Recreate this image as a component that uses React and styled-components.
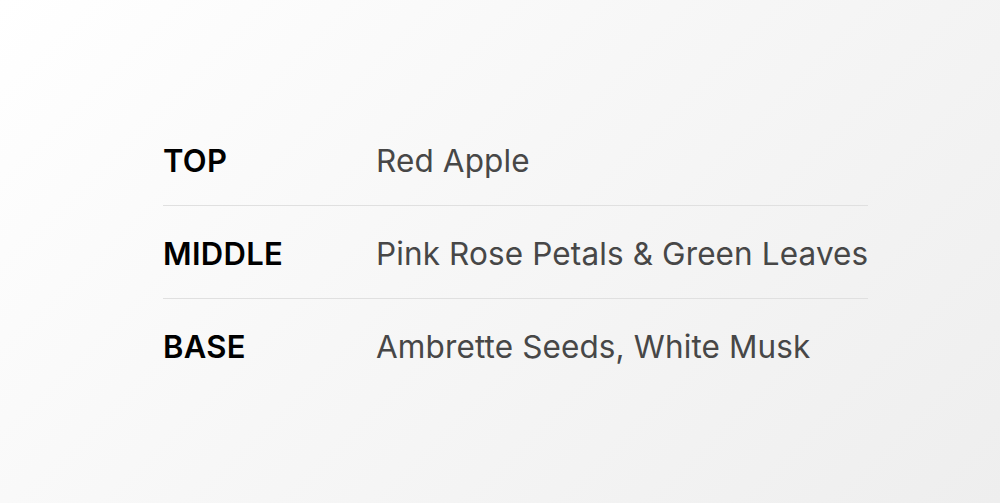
import styled, { createGlobalStyle } from "styled-components";

const GlobalStyle = createGlobalStyle`
  html, body {
    margin: 0;
    padding: 0;
  }

  body {
    font-family: Inter, "Noto Sans", sans-serif;
  }
`;

const Page = styled.main`
  display: flex;
  align-items: center;
  width: 100%;
  height: 503px;
  box-sizing: border-box;
  padding: 2px 0 0 163px;
  background: linear-gradient(135deg, #ffffff 0%, #f7f7f7 45%, #eeeeee 100%);
`;

const NotesList = styled.dl`
  width: 705px;
  margin: 0;
`;

const NoteRow = styled.div`
  display: grid;
  grid-template-columns: 213px 1fr;
  align-items: center;
  height: 93px;
  padding-top: 2px;
  box-sizing: border-box;
  border-bottom: ${({ $last }) => ($last ? "none" : "1px solid #e0e0e0")};
`;

const Label = styled.dt`
  margin: 0;
  font-size: 31px;
  font-weight: 600;
  color: #000;
  letter-spacing: 0.3px;
`;

const Value = styled.dd`
  margin: 0;
  font-size: 31.5px;
  font-weight: 400;
  color: #474747;
  letter-spacing: 0.12px;
  white-space: nowrap;
`;

const notes = [
  { label: "TOP", value: "Red Apple" },
  { label: "MIDDLE", value: "Pink Rose Petals & Green Leaves" },
  { label: "BASE", value: "Ambrette Seeds, White Musk" },
];

export default function App() {
  return (
    <>
      <GlobalStyle />
      <Page>
        <NotesList>
          {notes.map((note, i) => (
            <NoteRow key={note.label} $last={i === notes.length - 1}>
              <Label>{note.label}</Label>
              <Value>{note.value}</Value>
            </NoteRow>
          ))}
        </NotesList>
      </Page>
    </>
  );
}
